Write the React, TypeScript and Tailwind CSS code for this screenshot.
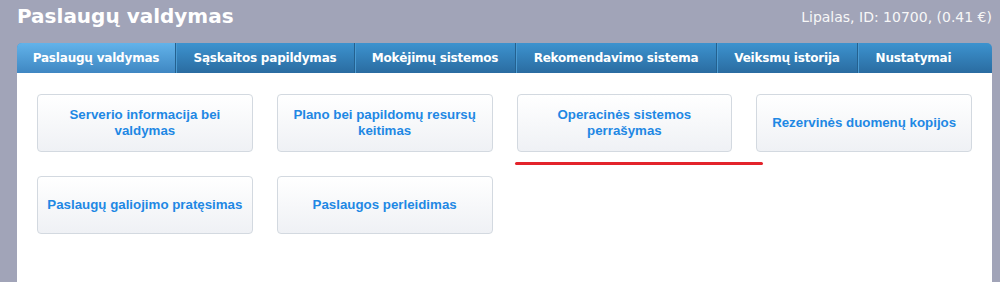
import React from "react";

const tabs = [
  { label: "Paslaugų valdymas", w: "w-[159px]" },
  { label: "Sąskaitos papildymas", w: "w-[179px]" },
  { label: "Mokėjimų sistemos", w: "w-[161px]" },
  { label: "Rekomendavimo sistema", w: "w-[201px]" },
  { label: "Veiksmų istorija", w: "w-[141px]" },
  { label: "Nustatymai", w: "w-[111px]" },
];

const actions = [
  "Serverio informacija bei valdymas",
  "Plano bei papildomų resursų keitimas",
  "Operacinės sistemos perrašymas",
  "Rezervinės duomenų kopijos",
  "Paslaugų galiojimo pratęsimas",
  "Paslaugos perleidimas",
];

export default function App() {
  return (
    <div className="min-h-[282px] w-[1000px] overflow-hidden bg-[#a1a4b8] pl-[17px] pr-[8px] font-['DejaVu_Sans',Verdana,sans-serif]">
      <header className="flex h-[43px] items-start justify-between">
        <h1 className="pt-[3px] text-[20px] font-bold leading-[26px] text-white">Paslaugų valdymas</h1>
        <div className="pt-[7px] text-[14px] leading-[20px] text-[#f7f7f7]">Lipalas, ID: 10700, (0.41 €)</div>
      </header>

      <nav className="flex h-[30px] overflow-hidden rounded-t-[5px] bg-gradient-to-b from-[#3d93cf] to-[#2a6ca1]">
        {tabs.map((t, i) => (
          <div
            key={t.label}
            className={
              "flex shrink-0 items-center justify-center whitespace-nowrap text-[12px] font-bold tracking-[-0.2px] text-white " +
              t.w +
              (i === 0 ? " bg-gradient-to-b from-[#62b3ea] to-[#3f87c2]" : "") +
              (i < tabs.length - 1 ? " border-r border-r-[#24618f] shadow-[1px_0_0_#4a9bd3]" : "")
            }
          >
            {t.label}
          </div>
        ))}
      </nav>

      <main className="relative h-[209px] bg-white px-[20px] pt-[21px]">
        <div className="grid w-[935px] grid-cols-4 gap-x-[24px] gap-y-[24px]">
          {actions.map((a) => (
            <button
              key={a}
              className="flex h-[58px] items-center justify-center rounded-[4px] border border-[#d3d9e0] bg-gradient-to-b from-white to-[#eff1f5] px-[8px] text-center font-['Liberation_Sans',Arial,sans-serif] text-[13.3px] font-bold leading-[16px] text-[#1f88e4]"
            >
              {a}
            </button>
          ))}
        </div>
        <div className="absolute left-[498px] top-[89px] h-[3px] w-[248px] rounded-full bg-[#e3232b]" />
      </main>
    </div>
  );
}
